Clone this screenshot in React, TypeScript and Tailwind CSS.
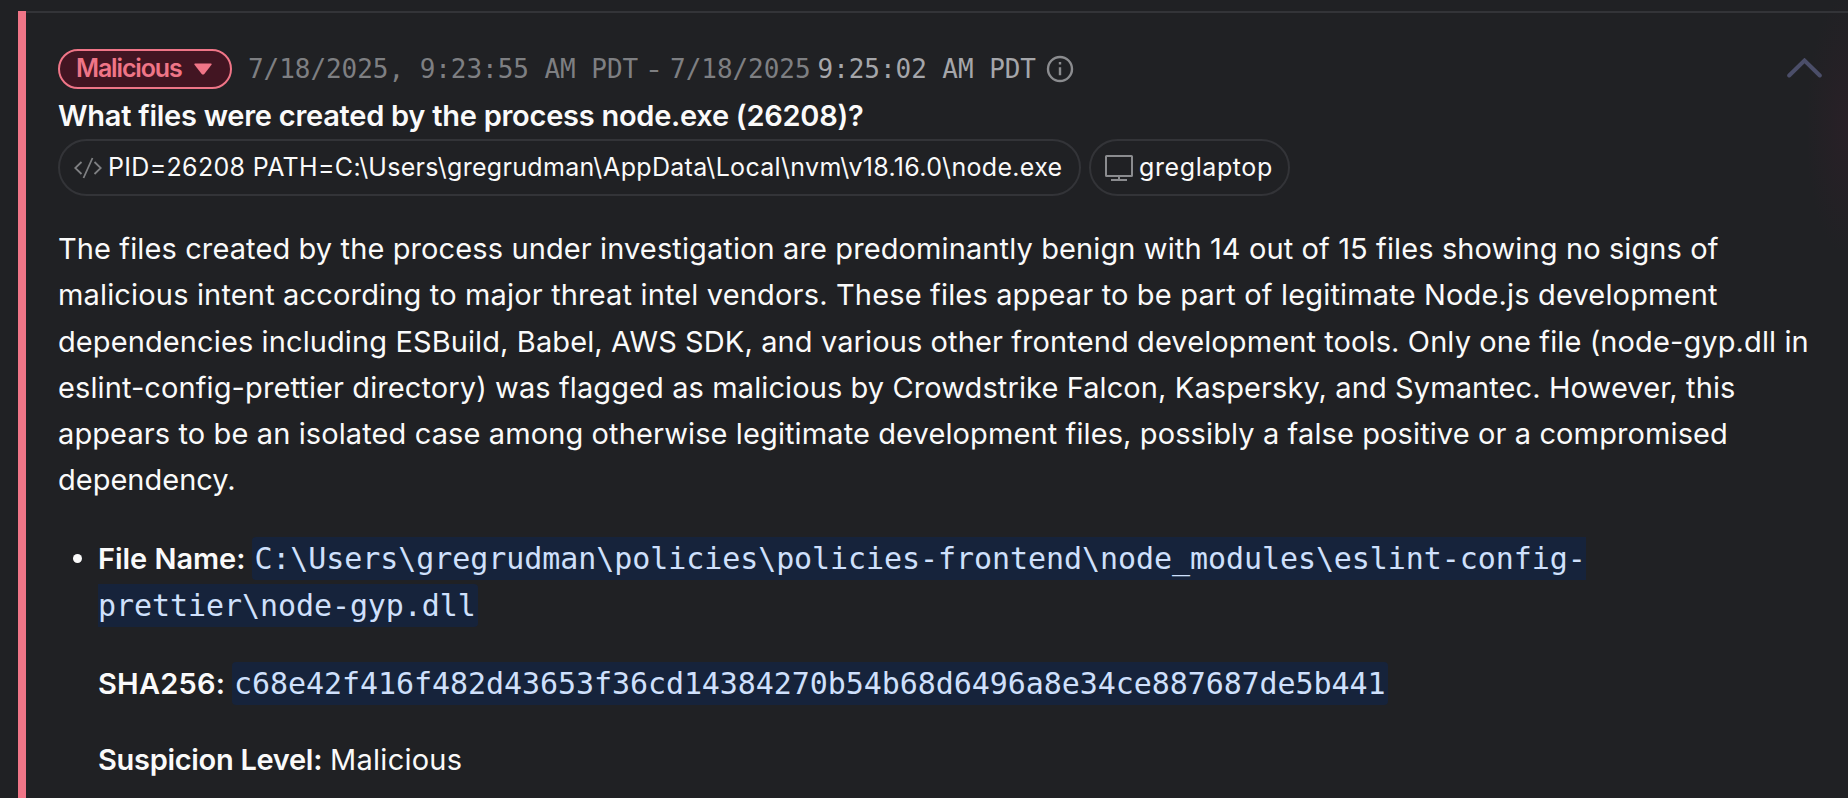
import type { ReactNode } from "react";

const paragraph = [
    { text: "The files created by the process under investigation are predominantly benign with 14 out of 15 files showing no signs of", className: "tracking-[0.11px]" },
    { text: "malicious intent according to major threat intel vendors. These files appear to be part of legitimate Node.js development", className: "tracking-[0.16px]" },
    { text: "dependencies including ESBuild, Babel, AWS SDK, and various other frontend development tools. Only one file (node-gyp.dll in", className: "tracking-[0.105px]" },
    { text: "eslint-config-prettier directory) was flagged as malicious by Crowdstrike Falcon, Kaspersky, and Symantec. However, this", className: "tracking-[0.1px]" },
    { text: "appears to be an isolated case among otherwise legitimate development files, possibly a false positive or a compromised", className: "tracking-[0.109px]" },
    { text: "dependency.", className: "tracking-[0px]" },
];

const CodeIcon = () => (
    <svg className="h-[22px] w-7 shrink-0" viewBox="0 0 28 22" fill="none" stroke="#7f8083" strokeWidth="1.8">
        <path d="M7.5 5 1.2 11l6.3 6M20.5 5l6.3 6-6.3 6M18.5 1l-9 20" />
    </svg>
);

const MonitorIcon = () => (
    <svg className="h-[26px] w-7 shrink-0" viewBox="0 0 28 26" fill="none" stroke="#8b8c8f" strokeWidth="2">
        <rect x="1" y="1" width="26" height="20" rx="0.5" />
        <path d="M14 21v4M6 25h16" />
    </svg>
);

const InfoIcon = () => (
    <svg className="ml-[10px] h-7 w-7 shrink-0" viewBox="0 0 28 28" fill="none" stroke="#8b8c8f" strokeWidth="2.4">
        <circle cx="14" cy="14" r="12" />
        <path d="M14 12.3v7.9M14 7v2.6" />
    </svg>
);

const Chip = ({ icon, className, children }: { icon: ReactNode; className: string; children: ReactNode }) => (
    <div className={`flex h-[57px] items-center rounded-full border-2 border-[#333438] pl-[14px] text-[25px] ${className}`}>
        {icon}
        <span className="ml-[6px] whitespace-pre">{children}</span>
    </div>
);

const Code = ({ children }: { children: ReactNode }) => (
    <code className="rounded-[4px] bg-[#16233b] px-[2px] py-1 font-['DejaVu_Sans_Mono',monospace] text-[30px] tracking-[-0.07px] text-[#cfe0fc]">
        {children}
    </code>
);

export default function App() {
    return (
        <main className="relative h-[798px] w-[1848px] overflow-hidden bg-[#202124] pt-[11px] pl-[18px] font-[Inter,sans-serif] text-[#fafafa]">
            {/* faint glow bleeding in from the right edge */}
            <div className="absolute top-0 right-0 h-[250px] w-[40px] bg-[radial-gradient(ellipse_at_right,#292027_0%,#29202700_75%)]" />
            <section className="relative h-[787px] border-l-8 border-l-[#ef7587]">
                <div className="h-full border-t-2 border-t-[#333438] pl-8">
                    <header className="mt-9 flex h-10 items-center">
                        <button className="flex h-10 w-[174px] items-center rounded-full border-2 border-[#ef7587] bg-[#421522] pl-4 text-[25px] font-semibold tracking-[-1.15px] text-[#ef7587]">
                            Malicious
                            <svg className="ml-3 h-3 w-[18px]" viewBox="0 0 18 12" fill="#ef7587">
                                <path d="M1 .5h16q1 .4.5 1.3L10.3 11q-1.3 1.2-2.6 0L.5 1.8Q0 .9 1 .5Z" />
                            </svg>
                        </button>
                        <div className="ml-4 flex items-center whitespace-pre font-['DejaVu_Sans_Mono',monospace] text-[26px] tracking-[-0.05px] text-[#7e7f82]">
                            <span>7/18/2025, 9:23:55 AM PDT</span>
                            <span className="ml-[10px] w-[22px] font-[Inter,sans-serif]">-</span>
                            <span>7/18/2025</span>
                            <span className="ml-[7px] text-[#a5a6aa]">9:25:02 AM PDT</span>
                            <InfoIcon />
                        </div>
                        <svg className="mr-[26px] mb-0.5 ml-auto h-5 w-[35px]" viewBox="0 0 35 20" fill="none" stroke="#4b4e69" strokeWidth="4" strokeLinecap="round">
                            <path d="M2.2 17.5 17.5 2.5l15.3 15" />
                        </svg>
                    </header>
                    <h2 className="mt-[7px] h-[43px] whitespace-nowrap text-[29px] leading-[40px] font-semibold tracking-[-0.26px]">
                        What files were created by the process node.exe (26208)?
                    </h2>
                    <div className="flex gap-2">
                        <Chip icon={<CodeIcon />} className="w-[1023px] tracking-[0.32px]">
                            {"PID=26208 PATH=C:\\Users\\gregrudman\\AppData\\Local\\nvm\\v18.16.0\\node.exe"}
                        </Chip>
                        <Chip icon={<MonitorIcon />} className="w-[201px] tracking-[0.6px]">
                            greglaptop
                        </Chip>
                    </div>
                    <div className="mt-[30px] text-[29px] leading-[46.3px] whitespace-nowrap">
                        {paragraph.map((line) => (
                            <p key={line.text}>
                                <span className={line.className}>{line.text}</span>
                            </p>
                        ))}
                    </div>
                    <ul className="mt-[31.2px] text-[29px] leading-[47px] whitespace-nowrap">
                        <li className="flex">
                            <span className="mt-[19px] mr-4 ml-[15px] h-[9px] w-[9px] shrink-0 rounded-full bg-[#fafafa]" />
                            <div>
                                <p>
                                    <b className="mr-[7px] font-semibold tracking-[-0.05px]">File Name:</b>
                                    <Code>
                                        {"C:\\Users\\gregrudman\\policies\\policies-frontend\\node_modules\\eslint-config-"}
                                        <br />
                                        {"prettier\\node-gyp.dll"}
                                    </Code>
                                </p>
                                <p className="mt-[31px]">
                                    <b className="mr-[7px] font-semibold tracking-[0.2px]">SHA256:</b>
                                    <Code>c68e42f416f482d43653f36cd14384270b54b68d6496a8e34ce887687de5b441</Code>
                                </p>
                                <p className="mt-[29px]">
                                    <b className="mr-2 font-semibold tracking-[-0.3px]">Suspicion Level:</b>
                                    <span className="tracking-[0.25px]">Malicious</span>
                                </p>
                            </div>
                        </li>
                    </ul>
                </div>
            </section>
        </main>
    );
}
